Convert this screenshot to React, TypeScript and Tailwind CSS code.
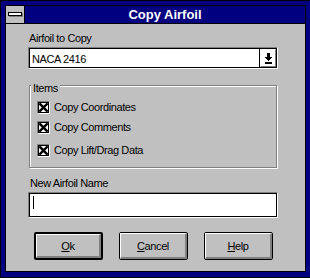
import React from 'react';

const FONT = "font-['Liberation_Sans',Arial,sans-serif]";

const Sunken: React.FC<{ className?: string; children?: React.ReactNode }> = ({ className = '', children }) => (
    <div className={`border border-t-[#808080] border-l-[#808080] border-r-white border-b-white ${className}`}>
        <div className="h-full border border-black bg-white flex">{children}</div>
    </div>
);

const CheckBox: React.FC<{ label: string; className?: string }> = ({ label, className = '' }) => (
    <div className={`h-[16px] flex items-center gap-[4px] ${className}`}>
        <div className="w-[13px] h-[13px] border border-t-[#808080] border-l-[#808080] border-r-white border-b-white">
            <div className="w-full h-full border border-black bg-white">
                <svg width="9" height="9" viewBox="0 0 9 9" className="block">
                    <path d="M1.2 1.2 L7.8 7.8 M7.8 1.2 L1.2 7.8" stroke="#000" strokeWidth="2.4" strokeLinecap="square" />
                </svg>
            </div>
        </div>
        <span className="leading-[13px]">{label}</span>
    </div>
);

const DialogButton: React.FC<{ accel: string; rest: string; isDefault?: boolean }> = ({ accel, rest, isDefault }) => (
    <div className={`w-[69px] h-[28px] rounded-[2px] border-black bg-[#c0c0c0] ${isDefault ? 'border-2' : 'border'}`}>
        <div className="h-full border-t border-l border-t-white border-l-white border-r-2 border-b-2 border-r-[#808080] border-b-[#808080] flex items-center justify-center pt-[1px]">
            <span className="leading-[13px]">
                <span className="underline underline-offset-[1px] decoration-1">{accel}</span>{rest}
            </span>
        </div>
    </div>
);

export default function App() {
    return (
        <div className={`w-[310px] h-[278px] overflow-hidden bg-white ${FONT} text-[11px] tracking-[-0.4px] text-black`}>
            {/* Window frame */}
            <div className="w-[311px] h-[278px] border border-black bg-[#000080] pt-[4px] px-[4px] pb-[5px]">
                <div className="border border-black h-full flex flex-col">
                    {/* Title bar */}
                    <div className="h-[18px] flex border-b border-black">
                        <div className="w-[19px] h-[17px] bg-[#c0c0c0] border-r border-black flex items-center justify-center">
                            <div className="w-[14px] h-[4px] border border-black bg-white shadow-[1px_1px_0_#808080] -mt-[1px] -ml-[1px]" />
                        </div>
                        <div className="flex-1 bg-[#000080] flex items-center justify-center text-white font-bold text-[13px] tracking-normal leading-[17px]">
                            Copy Airfoil
                        </div>
                    </div>

                    {/* Client area */}
                    <div className="flex-1 bg-[#c0c0c0] pl-[22px] pt-[8px]">
                        <div className="w-[250px] flex flex-col">
                            <div className="leading-[13px] pl-[1px]">Airfoil to Copy</div>

                            <Sunken className="mt-[2px] h-[22px]">
                                <div className="flex-1 leading-[18px] pl-[2px] pt-[1px]">NACA 2416</div>
                                <div className="w-[17px] border-l border-black">
                                    <div className="h-full border-t border-l border-t-white border-l-white border-r border-b border-r-[#808080] border-b-[#808080] flex items-center justify-center">
                                        <svg width="7" height="11" viewBox="0 0 7 11" shapeRendering="crispEdges" className="block">
                                            <rect x="2" y="0" width="3" height="4" fill="#000" />
                                            <rect x="0" y="4" width="7" height="1" fill="#000" />
                                            <rect x="1" y="5" width="5" height="1" fill="#000" />
                                            <rect x="2" y="6" width="3" height="1" fill="#000" />
                                            <rect x="3" y="7" width="1" height="1" fill="#000" />
                                            <rect x="0" y="9" width="7" height="2" fill="#000" />
                                        </svg>
                                    </div>
                                </div>
                            </Sunken>

                            {/* Items group */}
                            <div className="relative ml-[1px] mt-[16px] w-[248px] h-[83px] border border-[#808080] shadow-[inset_1px_1px_0_#fff,1px_1px_0_#fff] pt-[13px] pl-[7px]">
                                <span className="absolute -top-[4px] left-[1px] px-[2px] bg-[#c0c0c0] leading-[13px]">Items</span>
                                <CheckBox label="Copy Coordinates" />
                                <CheckBox label="Copy Comments" className="mt-[4px]" />
                                <CheckBox label="Copy Lift/Drag Data" className="mt-[7px]" />
                            </div>

                            <div className="mt-[9px] leading-[13px] pl-[2px]">New Airfoil Name</div>

                            <Sunken className="mt-[2px] h-[26px]">
                                <div className="ml-[3px] mt-[2px] w-[1px] h-[13px] bg-black" />
                            </Sunken>

                            <div className="mt-[14px] ml-[6px] flex gap-[16px]">
                                <DialogButton accel="O" rest="k" isDefault />
                                <DialogButton accel="C" rest="ancel" />
                                <DialogButton accel="H" rest="elp" />
                            </div>
                        </div>
                    </div>
                </div>
            </div>
        </div>
    );
}
